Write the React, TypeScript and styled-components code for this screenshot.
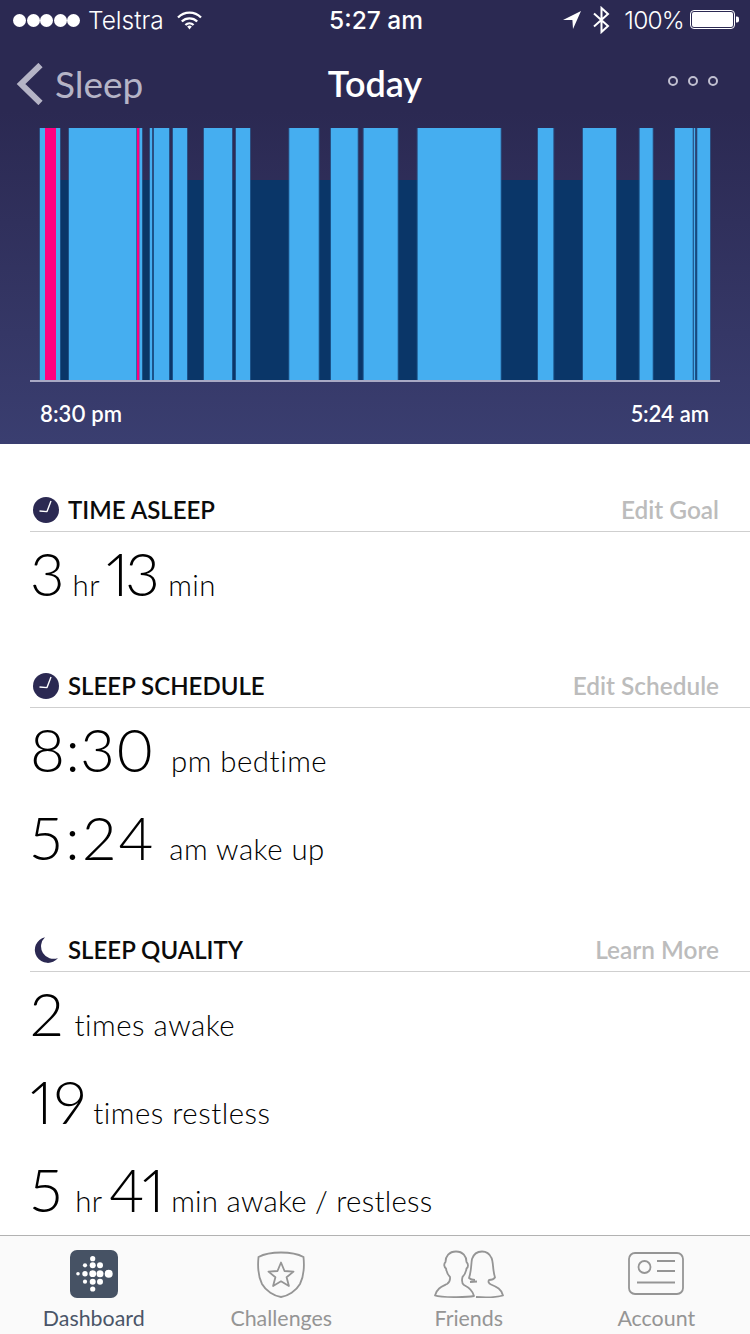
import React from "react";
import styled, { createGlobalStyle } from "styled-components";

const GlobalStyle = createGlobalStyle`
  html, body {
    margin: 0;
    padding: 0;
    background: #fff;
  }
  * {
    box-sizing: border-box;
  }
`;

const Page = styled.div`
  width: 750px;
  height: 1334px;
  display: flex;
  flex-direction: column;
  overflow: hidden;
  font-family: Lato, "Open Sans", sans-serif;
  font-variant-numeric: proportional-nums;
  color: #000;
`;

const Header = styled.header`
  height: 444px;
  flex: none;
  display: flex;
  flex-direction: column;
  background: linear-gradient(180deg, #2b2952 0%, #2b2952 25%, #3a3e70 100%);
  color: #fff;
`;

const StatusBar = styled.div`
  height: 40px;
  padding: 0 11px 0 13px;
  display: grid;
  grid-template-columns: 1fr auto 1fr;
  align-items: center;
  font-family: Inter, sans-serif;
  font-size: 24.5px;
  font-weight: 300;
`;

const StatusLeft = styled.div`
  display: flex;
  align-items: center;
`;

const StatusRight = styled.div`
  display: flex;
  align-items: center;
  justify-content: flex-end;
`;

const Clock = styled.div`
  font-weight: 500;
`;

const Signal = styled.div`
  display: flex;
  gap: 0.5px;
  margin-right: 8px;
`;

const SignalDot = styled.span`
  width: 13px;
  height: 13px;
  border-radius: 50%;
  background: #fff;
`;

const Carrier = styled.span`
  margin-right: 13px;
`;

const Percent = styled.span`
  margin: 0 6px 0 14px;
  letter-spacing: -0.8px;
`;

const NavBar = styled.div`
  height: 88px;
  padding: 0 16px;
  display: grid;
  grid-template-columns: 1fr auto 1fr;
  align-items: center;
`;

const BackLink = styled.div`
  display: flex;
  align-items: center;
  gap: 12px;
  color: #b5b4c6;
  font-size: 37px;
  line-height: 44px;
`;

const NavTitle = styled.div`
  font-size: 36px;
  line-height: 44px;
  font-weight: 600;
  padding-bottom: 2px;
`;

const MoreDots = styled.div`
  display: flex;
  justify-content: flex-end;
  gap: 10px;
  padding-right: 16px;
  transform: translateY(-3px);
`;

const MoreDot = styled.span`
  width: 10px;
  height: 10px;
  border: 2px solid #c0bfd0;
  border-radius: 50%;
`;

const ChartSvg = styled.svg`
  display: block;
  flex: none;
  margin-left: 30px;
`;

const TimeAxis = styled.div`
  display: flex;
  justify-content: space-between;
  padding: 18px 41px 0 40px;
  font-size: 22px;
  font-weight: 600;
`;

const Content = styled.main`
  flex: 1;
  min-height: 0;
  overflow: hidden;
  padding-left: 30px;
`;

const SectionHead = styled.div`
  height: 88px;
  padding: 0 31px 6px 3px;
  display: flex;
  align-items: flex-end;
  gap: 9px;
  border-bottom: 1px solid #cfcfcf;
`;

const SectionIcon = styled.svg`
  flex: none;
  width: 26px;
  height: 26px;
  margin-bottom: 2px;
`;

const SectionTitle = styled.h2`
  margin: 0;
  font-size: 24px;
  line-height: 30px;
  font-weight: 600;
  color: #0b0b0b;
  flex: 1;
`;

const SectionLink = styled.span`
  font-size: 24.4px;
  line-height: 30px;
  font-weight: 600;
  color: #bcbcbc;
`;

const StatRow = styled.div`
  height: 88px;
  padding-top: 1px;
  display: flex;
  align-items: baseline;
  line-height: 80px;
`;

const Big = styled.span<{ $gap: number; $tracking?: number }>`
  font-size: 60px;
  font-weight: 300;
  letter-spacing: ${({ $tracking }) => $tracking ?? 0}px;
  margin-right: ${({ $gap }) => $gap}px;
`;

const Unit = styled.span<{ $tail?: boolean }>`
  font-size: 29.4px;
  font-weight: 300;
  letter-spacing: 0.5px;
  margin-right: ${({ $tail }) => ($tail ? "0" : "6px")};
`;

const LongUnit = styled(Unit)`
  letter-spacing: 0.25px;
`;

const TabBar = styled.nav`
  height: 99px;
  flex: none;
  display: grid;
  grid-template-columns: repeat(4, 1fr);
  border-top: 1px solid #b2b2b2;
  background: #fafafa;
`;

const Tab = styled.div<{ $active?: boolean }>`
  display: flex;
  flex-direction: column;
  align-items: center;
  justify-content: flex-end;
  padding-bottom: 1px;
  font-size: 21.4px;
  line-height: 30px;
  color: ${({ $active }) => ($active ? "#4a5568" : "#959595")};
`;

const TabIcon = styled.svg`
  display: block;
  margin-bottom: 5px;
`;

const BAND_START = 30;
const LIGHT_BARS: [number, number][] = [
  [10, 15],
  [26, 30],
  [39, 106.3],
  [109.3, 112],
  [120, 122],
  [124, 139],
  [143, 157],
  [174, 202],
  [206, 220],
  [259.3, 288.7],
  [301, 327.7],
  [333.7, 367.7],
  [387.7, 470.7],
  [508, 523.3],
  [553, 586],
  [609.7, 622.7],
  [645, 662.7],
  [664, 665],
  [667.3, 680],
];
const PINK_BARS: [number, number][] = [
  [15, 26],
  [107, 109.3],
];

const SleepChart = () => (
  <ChartSvg width="690" height="254" viewBox="0 0 690 254">
    <rect x={BAND_START} y="52" width="637.3" height="200" fill="#0a3668" />
    {LIGHT_BARS.map(([from, to]) => (
      <g key={from}>
        <rect x={from - 1} y="0" width={to - from + 2} height="252" fill="#2a6ba6" fillOpacity="0.55" />
        <rect x={from} y="0" width={to - from} height="252" fill="#45aef0" />
      </g>
    ))}
    {PINK_BARS.map(([from, to]) => (
      <rect key={from} x={from} y="0" width={to - from} height="252" fill="#ff0080" />
    ))}
    <rect x="0" y="252" width="690" height="2" fill="#a9a9c4" />
  </ChartSvg>
);

const ClockIcon = () => (
  <SectionIcon viewBox="0 0 26 26">
    <circle cx="13" cy="13" r="13" fill="#2b2952" />
    <path d="M6.5 14 L14 14.6 L18 4" fill="none" stroke="#fff" strokeWidth="1.4" strokeLinejoin="round" />
  </SectionIcon>
);

const MoonIcon = () => (
  <SectionIcon viewBox="0 0 26 26">
    <path d="M12 0.2 A13 13 0 1 0 25 21 A12.5 12.5 0 0 1 12 0.2 Z" fill="#2b2952" />
  </SectionIcon>
);

const WifiIcon = () => (
  <svg width="25" height="19" viewBox="0 0 25 19" fill="none" stroke="#fff" strokeWidth="2.3">
    <path d="M1 6.5 A16 16 0 0 1 24 6.5" />
    <path d="M4.8 10.5 A11 11 0 0 1 20.2 10.5" />
    <path d="M8.4 14 A6 6 0 0 1 16.6 14" />
    <path d="M10.2 15.6 L12.5 18.4 L14.8 15.6 A3.4 3.4 0 0 0 10.2 15.6 Z" fill="#fff" stroke="none" />
  </svg>
);

const LocationIcon = () => (
  <svg width="18" height="18" viewBox="0 0 18 18" style={{ marginRight: 12 }}>
    <path d="M0 9 L18 0 L10 18 L9.4 9 Z" fill="#fff" />
  </svg>
);

const BluetoothIcon = () => (
  <svg width="17" height="28" viewBox="0 0 17 28" fill="none" stroke="#fff" strokeWidth="2">
    <path d="M1 7.5 L15 20 L8.5 26 L8.5 2 L15 8 L1 20.5" />
  </svg>
);

const BatteryIcon = () => (
  <svg width="49" height="20" viewBox="0 0 49 20">
    <rect x="0.5" y="0.5" width="44" height="18" rx="3.5" fill="none" stroke="#fff" />
    <rect x="2" y="2" width="41" height="15" rx="2" fill="#fff" />
    <path d="M46 6.5 h1 a2 2 0 0 1 2 2 v2 a2 2 0 0 1 -2 2 h-1 Z" fill="#fff" />
  </svg>
);

const BackChevron = () => (
  <svg width="27" height="42" viewBox="0 0 27 42" fill="none" stroke="#b5b4c6" strokeWidth="6">
    <path d="M24.5 2 L5 21 L24.5 40" />
  </svg>
);

const FITBIT_DOTS: [number, number, number][] = [
  [22.7, 8.7, 2.6],
  [22.7, 15.3, 3],
  [22.7, 23.7, 3.4],
  [22.7, 31.7, 3],
  [22.7, 39, 2.6],
  [15, 15.3, 2.1],
  [15, 23.7, 2.7],
  [15, 31.7, 2.1],
  [8, 23.7, 1.8],
  [30, 15.3, 3],
  [30, 23.7, 3.5],
  [30, 31.7, 3],
  [38.7, 23.7, 4],
];

const DashboardIcon = () => (
  <TabIcon width="48" height="48" viewBox="0 0 48 48">
    <rect width="48" height="48" rx="7" fill="#465264" />
    {FITBIT_DOTS.map(([cx, cy, r]) => (
      <circle key={`${cx}-${cy}`} cx={cx} cy={cy} r={r} fill="#fff" />
    ))}
  </TabIcon>
);

const ChallengesIcon = () => (
  <TabIcon width="48" height="48" viewBox="0 0 48 48" fill="none" stroke="#959595" strokeWidth="1.8">
    <path d="M1.5 7 C8 3.5 16 2.5 24 2.5 C32 2.5 40 3.5 46.5 7 C47.5 17 47 26 43 34 C39 41 31 46 24 47 C17 46 9 41 5 34 C1 26 0.5 17 1.5 7 Z" />
    <path d="M24 12.5 L27.5 21 L36.5 21.6 L29.6 27.3 L31.9 36 L24 31.3 L16.1 36 L18.4 27.3 L11.5 21.6 L20.5 21 Z" strokeLinejoin="round" />
  </TabIcon>
);

const FriendsIcon = () => (
  <TabIcon width="70" height="48" viewBox="0 0 70 48" fill="none" stroke="#959595" strokeWidth="1.8" strokeLinejoin="round">
    <path d="M22 1.5 C15 1.5 11.5 6.5 11.5 12 C9.5 14 10 17 12 18.5 C12.5 22 14 25 16 27 C16.5 31 15.5 32.5 13 34 C8 36.5 3 38 1 45.5 C7 47.5 33 47.5 40 46 C38.5 39.5 34 37 30 35 C28 33.5 27.5 31 28.5 27 C30.5 25 32 22 32.5 18.5 C34.5 17 34.5 14 32.5 12 C32.5 6.5 29 1.5 22 1.5 Z" />
    <path d="M42 47 C50 47.5 62 47.5 69 45.5 C67.5 39 63 37 57 34.5 C54.5 33.5 54 31.5 55 30 C58 30 60 29 61 27.5 C58.5 20 59.5 12 57.5 8 C55.5 3.5 52 1.5 48 1.5 C43 1.5 39.5 4.5 38 9 C37 14 37.5 21 35 28 C36 29 38 30 41 30" />
    <path d="M36 32 L43 31.5" />
  </TabIcon>
);

const AccountIcon = () => (
  <TabIcon width="56" height="48" viewBox="0 0 56 48" fill="none" stroke="#959595" strokeWidth="1.8">
    <rect x="1" y="3" width="54" height="41" rx="6" />
    <circle cx="16.5" cy="17" r="6" />
    <path d="M29 11 H47 M29 21 H47 M9 32.5 H47" />
  </TabIcon>
);

const App = () => (
  <>
    <GlobalStyle />
    <Page>
      <Header>
        <StatusBar>
          <StatusLeft>
            <Signal>
              {[0, 1, 2, 3, 4].map((i) => (
                <SignalDot key={i} />
              ))}
            </Signal>
            <Carrier>Telstra</Carrier>
            <WifiIcon />
          </StatusLeft>
          <Clock>5:27 am</Clock>
          <StatusRight>
            <LocationIcon />
            <BluetoothIcon />
            <Percent>100%</Percent>
            <BatteryIcon />
          </StatusRight>
        </StatusBar>
        <NavBar>
          <BackLink>
            <BackChevron />
            Sleep
          </BackLink>
          <NavTitle>Today</NavTitle>
          <MoreDots>
            <MoreDot />
            <MoreDot />
            <MoreDot />
          </MoreDots>
        </NavBar>
        <SleepChart />
        <TimeAxis>
          <span>8:30 pm</span>
          <span>5:24 am</span>
        </TimeAxis>
      </Header>
      <Content>
        <SectionHead>
          <ClockIcon />
          <SectionTitle>TIME ASLEEP</SectionTitle>
          <SectionLink>Edit Goal</SectionLink>
        </SectionHead>
        <StatRow>
          <Big $gap={8}>3</Big>
          <Unit>hr</Unit>
          <Big $gap={12} $tracking={-3.5}>13</Big>
          <Unit $tail>min</Unit>
        </StatRow>
        <SectionHead>
          <ClockIcon />
          <SectionTitle>SLEEP SCHEDULE</SectionTitle>
          <SectionLink>Edit Schedule</SectionLink>
        </SectionHead>
        <StatRow>
          <Big $gap={8} $tracking={0.4}>8:30</Big>
          <Unit $tail>&nbsp;pm bedtime</Unit>
        </StatRow>
        <StatRow>
          <Big $gap={4} $tracking={3}>5:24</Big>
          <Unit $tail>&nbsp;am wake up</Unit>
        </StatRow>
        <SectionHead>
          <MoonIcon />
          <SectionTitle>SLEEP QUALITY</SectionTitle>
          <SectionLink>Learn More</SectionLink>
        </SectionHead>
        <StatRow>
          <Big $gap={11}>2</Big>
          <Unit $tail>times awake</Unit>
        </StatRow>
        <StatRow>
          <Big $gap={5.5} $tracking={1.5}>19</Big>
          <Unit $tail>times restless</Unit>
        </StatRow>
        <StatRow>
          <Big $gap={13}>5</Big>
          <Unit>hr</Unit>
          <Big $gap={8} $tracking={-1.5}>41</Big>
          <LongUnit $tail>min awake / restless</LongUnit>
        </StatRow>
      </Content>
      <TabBar>
        <Tab $active>
          <DashboardIcon />
          Dashboard
        </Tab>
        <Tab>
          <ChallengesIcon />
          Challenges
        </Tab>
        <Tab>
          <FriendsIcon />
          Friends
        </Tab>
        <Tab>
          <AccountIcon />
          Account
        </Tab>
      </TabBar>
    </Page>
  </>
);

export default App;
